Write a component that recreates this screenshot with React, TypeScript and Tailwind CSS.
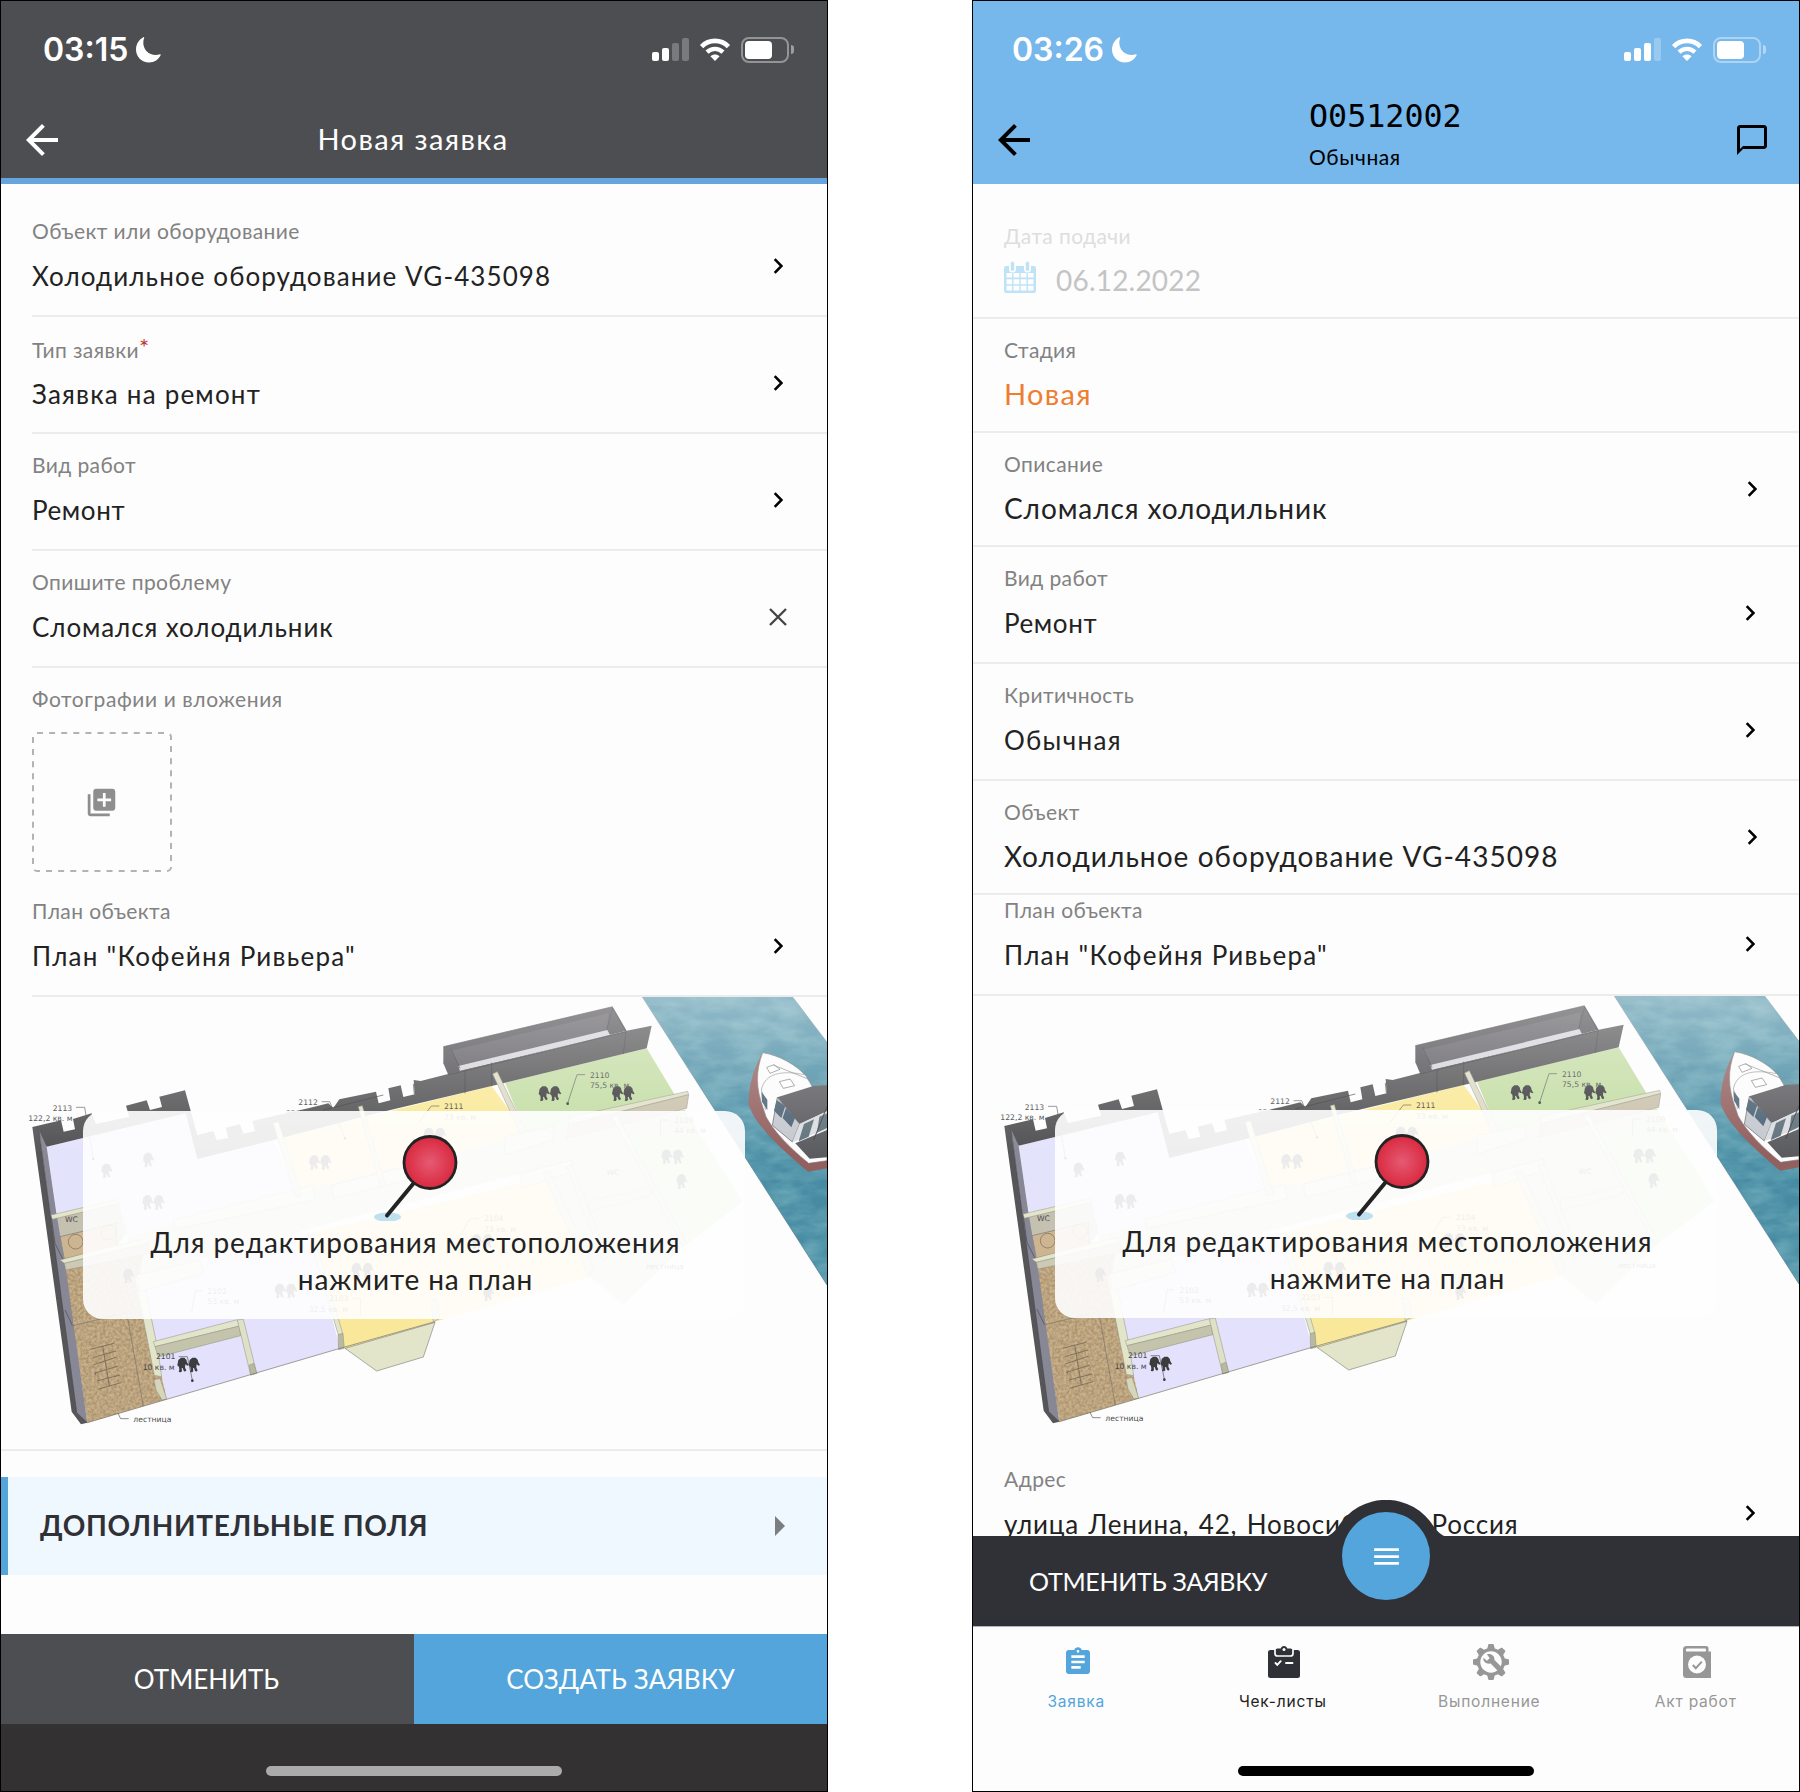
import type { ReactNode } from 'react';
import { MdArrowBack, MdAssignment, MdChatBubbleOutline, MdLibraryAdd, MdMenu } from 'react-icons/md';

function Moon() {
  return (
    <svg viewBox="0 0 26 26" className="size-[26px]" fill="currentColor">
      <path d="M9.2 0.8C8.6 2.4 8.3 4 8.3 5.8c0 7 5.5 12.2 12.4 12.2 1.6 0 3-.2 4.3-.8.5-.2.9.2.7.7C23.8 22.400 19.400 25.400 14 25.400 6.600 25.400 1 19.800 1 12.500 1 7.100 4 2.300 8.400.2c.6-.3 1 .1.8.6z" />
    </svg>
  );
}

function StatusBar({ time, bars, inset }: { time: string; bars: number; inset: string }) {
  const heights = ['h-[9px]', 'h-[13px]', 'h-[18px]', 'h-[23px]'];
  return (
    <div className={`flex h-[97px] items-center pr-[33px] text-white ${inset}`}>
      <span className="font-['Inter',sans-serif] text-[32px] font-semibold leading-none">{time}</span>
      <span className="ml-[7px]"><Moon /></span>
      <div className="ml-auto flex items-center gap-[10px]">
        <div className="flex h-[23px] items-end gap-[3px]">
          {heights.map((h, i) => (
            <span key={h} className={`w-[7px] rounded-[2px] bg-white ${h} ${i < bars ? '' : 'opacity-25'}`} />
          ))}
        </div>
        <svg viewBox="0 0 32 25" className="h-[25px] w-8" fill="none" stroke="#fff">
          <path d="M2.600 9.600C10 2 22 2 29.400 9.600" strokeWidth="4.600" />
          <path d="M8 15.200c4.600-4.400 11.400-4.400 16 0" strokeWidth="4.400" />
          <path d="M16 24l-4.600-4.800c2.700-2.300 6.500-2.300 9.200 0z" fill="#fff" stroke="none" />
        </svg>
        <div className="flex items-center gap-[2px]">
          <span className="block h-[26px] w-[48px] rounded-[8px] border-2 border-white/40 p-[2px]">
            <span className="block h-full w-[27px] rounded-[4px] bg-white" />
          </span>
          <span className="h-[9px] w-[3px] rounded-r-full bg-white/45" />
        </div>
      </div>
    </div>
  );
}

function Chevron() {
  return (
    <svg viewBox="0 0 10 16" className="h-4 w-[10px]" fill="none" stroke="#000" strokeWidth="2.600">
      <path d="M1.700 1.200L8.500 8l-6.800 6.800" />
    </svg>
  );
}

function Field({ label, value, frame, labelTop, valueClass, action, actionClass }: {
  label: ReactNode; value: ReactNode; frame: string; labelTop: string; valueClass: string; action?: ReactNode; actionClass?: string;
}) {
  return (
    <div className={`flex justify-between overflow-hidden ${frame}`}>
      <div className={`whitespace-nowrap ${labelTop}`}>
        <div className="text-[21px] leading-6 tracking-[0.4px] text-[#828282]">{label}</div>
        <div className={`leading-8 ${valueClass}`}>{value}</div>
      </div>
      {action && <div className={actionClass}>{action}</div>}
    </div>
  );
}

const V26 = 'mt-[17px] text-[26px] tracking-[1.1px] text-[#222]';
const V26_TIGHT = 'mt-[17px] text-[26px] tracking-[0.8px] text-[#222]';
const V28 = 'mt-4 text-[28px] tracking-[1.05px] text-[#222]';
const LEFT_ROW = 'ml-[31px] h-[117px] border-b-2 border-[#ececec]';
const ROW_TALL = 'pl-[31px] h-[117px] border-b-2 border-[#ececec]';
const ROW = 'pl-[31px] h-[114px] border-b-2 border-[#ececec]';

function Figures({ x, y, single }: { x: number; y: number; single?: boolean }) {
  const body = 'M2 8l8-7 10 0 6 6 2 8 5 8-4 2-6-4-1 10 4 8-4 4-4-3-3-8-3 1 1 8-3 4-7-1 2-6-1-9-5-5z';
  return (
    <g transform={`translate(${x} ${y})`} fill="#3c3c3e">
      <path d={body} />
      {!single && <path d={body} transform="translate(34 0)" />}
    </g>
  );
}

const labels: [number, number, string][] = [
  [158, 392, '2113'], [85, 424, '122,2 кв. м'], [895, 375, '2112'], [857, 407, '85 кв. м'], [1332, 388, '2111'], [1332, 420, '73 кв. м'],
  [1770, 293, '2110'], [1770, 325, '75,5 кв. м'], [195, 725, 'WC'], [468, 1138, '2101'], [428, 1170, '10 кв. м'],
  [400, 1326, 'лестница'], [622, 942, '2102'], [622, 973, '53 кв. м'], [987, 964, '2103'], [926, 995, '32,5 кв. м'],
  [1452, 724, '2104'], [1452, 755, '73 кв. м'], [2022, 428, '2109'], [2022, 460, '44 кв. м'], [1937, 866, 'лестница'], [1820, 585, 'WC'],
];

function FloorPlan({ id }: { id: string }) {
  return (
    <svg viewBox="3 51 2478 1356" className="h-[452px] w-[826px]">
      <defs>
        <linearGradient id={`${id}-haze`} x1="0" y1="0" x2="0" y2="1">
          <stop offset="0" stopColor="#fdfdfd" stopOpacity="0.42" />
          <stop offset="0.350" stopColor="#fdfdfd" stopOpacity="0" />
        </linearGradient>
        <filter id={`${id}-waves`} x="0" y="0" width="1" height="1" colorInterpolationFilters="sRGB">
          <feTurbulence type="fractalNoise" baseFrequency="0.01 0.025" numOctaves="4" seed="4" />
          <feColorMatrix values="0 0 0 0 0.42  0 0 0 0 0.66  0 0 0 0 0.72  1.8 0 0 0 -0.55" />
          <feComposite in2="SourceGraphic" operator="in" result="n" />
          <feMerge><feMergeNode in="SourceGraphic" /><feMergeNode in="n" /></feMerge>
        </filter>
        <filter id={`${id}-grain`} x="0" y="0" width="1" height="1" colorInterpolationFilters="sRGB">
          <feTurbulence type="fractalNoise" baseFrequency="0.12" numOctaves="2" seed="9" />
          <feColorMatrix values="0 0 0 0 0.62  0 0 0 0 0.52  0 0 0 0 0.38  1.6 0 0 0 -0.5" />
          <feComposite in2="SourceGraphic" operator="in" result="n" />
          <feMerge><feMergeNode in="SourceGraphic" /><feMergeNode in="n" /></feMerge>
        </filter>
      </defs>

      <path d="M1927 51H2378L2481 187V915z" fill="#478ba3" filter={`url(#${id}-waves)`} />
      <path d="M1927 51L2481 915M2378 51L2481 187" stroke="#5f8794" strokeWidth="2" />

      <g>
        <path d="M2288 218C2262 262 2244 320 2246 372c14 54 80 120 178 203l57-10v-40L2330 400z" fill="#92605f" />
        <path d="M2288 218c50 8 100 36 130 70l20 34 43 8v212l-55 8c-70-58-106-100-128-140l-8-24c-22-60-24-110-2-168z" fill="#fcfcfd" stroke="#777" strokeWidth="2" />
        <path d="M2284 330c10-50 60-60 130-46M2284 330c10 20 10 40 12 60" fill="none" stroke="#888" strokeWidth="2" />
        <path d="M2300 262l22-8 18 14-30 12zM2338 305l32-8 14 20-34 8z" fill="#fff" stroke="#666" strokeWidth="2" />
        <path d="M2320 255l161 65M2440 340l10-20" stroke="#777" strokeWidth="2" />
        <path d="M2332 352l108-34 41-2v78l-82 38z" fill="#5c5c60" />
        <path d="M2332 352l67 80-22 54-60-50z" fill="#c5c9cf" stroke="#555" strokeWidth="2" />
        <path d="M2330 360l26 18-12 36-22-22zM2358 384l28 28-12 30-26-28zM2284 335l18 24v32l-16-26z" fill="#4b6274" />
        <path d="M2399 432l82-38v54l-104 38z" fill="#dadde1" />
        <path d="M2412 432l30-14-16 52-30 14zM2458 410l23-10v44l-30 14z" fill="#61727c" />
        <path d="M2386 490l95-40v82l-52 4z" fill="#5a5c5f" />
        <path d="M2481 380l-40 100" stroke="#444" strokeWidth="3" />
      </g>

      {/* outer terrace */}
      <path d="M1330 200L1838 80l42 72-535 133-15-35z" fill="#4f4d52" />
      <path d="M1352 212L1826 100l-6 54-440 106z" fill="#5d5b60" />
      <path d="M1375 258L1822 150l8 15-450 108z" fill="#d6d4da" />
      <path d="M1352 205l28 60M1838 84l-18 66M1838 84l38 68M1330 200L1838 80" stroke="#333" strokeWidth="2" fill="none" />

      {/* floors */}
      <path d="M140 500L557 400l35 137 228-57 70 162-370 85-140 45-25-112-185 40z" fill="#e4e3fc" />
      <path d="M830 478L1475 318l105 145-680 177z" fill="#fae997" />
      <path d="M1515 308L1940 205l88 145-448 115z" fill="#c4dda4" />
      <path d="M1830 405l225-15 173 275-178 135z" fill="#d3e6ba" />
      <path d="M520 727L1600 460l230-55 220 395-180 175-100-85-130-330-690 180-520 145-50-112z" fill="#dcd9cf" />
      <path d="M425 890L930 760l90 345-520 153z" fill="#e3e1fb" />
      <path d="M935 760L1640 590l130 300-465 135-270 80z" fill="#fae89a" />
      <path d="M1035 1105l270-78-35 104-140 42z" fill="#e3e5ca" stroke="#85857a" strokeWidth="2" />
      <path d="M195 868L430 815l-10 75 80 368-238 70z" fill="#c9b18c" filter={`url(#${id}-grain)`} />
      <path d="M155 712L355 660l25 100-30 40-160 35z" fill="#c5c1b0" />
      <path d="M180 770l170-40v70l-157 37z" fill="#cdb592" stroke="#777" strokeWidth="2" />
      <circle cx="227" cy="785" r="22" fill="none" stroke="#7a6a50" strokeWidth="2" />
      <circle cx="325" cy="757" r="22" fill="none" stroke="#7a6a50" strokeWidth="2" />

      {/* battlement wall */}
      <path d="M97 441L183 421l8 34 34-7-6-31 56-17 13 32 100-22-10-33 62-16 10 29 36-9-8-31 77-19 37 134 48-12 10 27 35-6-8-31 43-10 10 28 35-8-8-30 171-39 57-14 15 14 18-26 110-23 8 35 35-9-6-36 37-9 8 35 34-8-3-43L1262 303 1400 268 1640 212 1880 152 1955 137 1940 205 1515 308 1475 318 1130 400 830 478 592 537 557 400 140 500z" fill="#525254" />
      <path d="M1240 312l3 30M1395 340v-70M1475 318v-70M1870 222l8-66M970 390l180-45M1345 285L1880 155" stroke="#37373a" strokeWidth="2" fill="none" />
      <path d="M97 441l118 854 28 38 19-5-30-40L117 450z" fill="#565659" />
      <path d="M117 450l23 50 30 205 28 165 64 458-32-30z" fill="#878796" />
      <path d="M117 450l113 848M153 705l12 85 30 60M195 990l22 46M230 1298l32 30" stroke="#4a4a50" strokeWidth="2" fill="none" />

      {/* partitions */}
      <g stroke="#8f8f80" strokeWidth="1.500">
        <path d="M153 705l202-47 5 12-203 48z" fill="#e3e5ca" />
        <path d="M180 840l170-45 90-20 5 15-252 60z" fill="#e3e5ca" />
        <path d="M193 850l252-60v30l-247 50z" fill="#ccc9b4" />
        <path d="M405 892l22-10 45 220 13 88-22-4z" fill="#e3e5ca" />
        <path d="M462 1200l18-5 20 62-14 3-18-30z" fill="#d5d6bc" />
        <path d="M460 1085l252-66 8 19-255 62z" fill="#e3e5ca" />
        <path d="M465 1100l253-62 4 29-247 64z" fill="#c3c4ab" />
        <path d="M712 1020l18-3 40 163-18 5z" fill="#dfe1c6" />
        <path d="M748 1155l14-5 8 30-18 5z" fill="#b9b9a0" />
        <path d="M925 765l15-5 88 300-12 8z" fill="#e3e5ca" />
        <path d="M1014 1064l15-4 4 45-17 4z" fill="#b9b9a0" />
        <path d="M1478 282l14-7 88 185-18 3z" fill="#dcdac4" />
        <path d="M1705 412l358-78 3 10-360 90z" fill="#dfe1c6" />
        <path d="M1706 434l360-90-6 41-360 90z" fill="#c9c2ab" />
        <path d="M1835 410l15-5 210 385-10 10z" fill="#dfe1c6" />
        <path d="M520 720l420-105 5 45-420 88zM995 615l225-55v40l-220 55zM1515 470l145-30v40l-145 45zM1560 580l155-40v35l-150 50zM410 885l190-45 10 40-190 55z" fill="#e2e0cc" />
        <path d="M820 430l15-5 70 220-20 5zM1075 380l12-3 70 240-15 3zM1630 580l20-5 130 290-15 25zM1700 560l15-5 110 280-15 10zM1765 665l190-45v25l-190 50z" fill="#dfe1c6" />
        <path d="M1300 1025l-10-70 20 5 10 55z" fill="#dfe1c6" />
      </g>
      <path d="M262 1328l238-70 520-153 285-80M430 1278l-50-280-165 40" fill="none" stroke="#77736a" strokeWidth="2" />
      <path d="M272 1108l70-18M278 1133l70-20M280 1155l70-24M283 1180l72-22M290 1203l70-18M292 1228l72-20M308 1098l20 120M285 1178l3 8" fill="none" stroke="#6a6254" strokeWidth="2.200" />

      <g fill="none" stroke="#555" strokeWidth="2">
        <path d="M228 382h26l26 155M965 365h24l46 110M1318 378h-24l-38 50M1755 284h-24l-28 86M536 1130h26l15 70M386 1316h-24l-8-16M606 932h-20l-11 66M1055 955h26v52M1436 715h-24l-30 50M2006 420h-24v48" />
      </g>
      <g fill="#3a3a3c">
        <circle cx="1703" cy="371" r="4" /><circle cx="577" cy="1202" r="4" /><circle cx="1035" cy="475" r="4" /><circle cx="280" cy="537" r="4" />
      </g>
      <g className="font-['DejaVu_Sans',sans-serif] text-[23px]" fill="#4a4a4c">
        {labels.map(([x, y, t]) => <text key={`${x}-${y}`} x={x} y={y}>{t}</text>)}
      </g>
      <Figures x={1617} y={318} /><Figures x={1837} y={318} /><Figures x={533} y={1132} />
      <Figures x={305} y={550} single /><Figures x={430} y={517} single /><Figures x={428} y={645} />
      <Figures x={928} y={525} /><Figures x={1055} y={848} /><Figures x={825} y={910} /><Figures x={1272} y={442} />
      <Figures x={370} y={865} single /><Figures x={1985} y={508} /><Figures x={2030} y={582} single /><Figures x={1415} y={762} /><Figures x={1450} y={918} single />
      <rect x="3" y="51" width="2478" height="1356" fill={`url(#${id}-haze)`} />
    </svg>
  );
}

function PlanCard({ id }: { id: string }) {
  return (
    <div className="relative h-[452px] overflow-hidden">
      <FloorPlan id={id} />
      <div className="absolute left-[82px] top-[114px] h-[208px] w-[662px] rounded-[20px] bg-[#fefefe]/91">
        <svg viewBox="0 0 90 90" className="ml-[286px] mt-[20px] h-[90px] w-[90px]">
          <defs>
            <radialGradient id={`${id}-pin`}>
              <stop offset="0" stopColor="#e55a73" />
              <stop offset="1" stopColor="#d9293f" />
            </radialGradient>
          </defs>
          <ellipse cx="18.500" cy="86" rx="13.500" ry="4.500" fill="#bfe0ee" />
          <path d="M18 84.500L44 53" stroke="#232324" strokeWidth="4" strokeLinecap="round" />
          <circle cx="61" cy="31.500" r="26" fill={`url(#${id}-pin)`} stroke="#232324" strokeWidth="2.800" />
        </svg>
        <p className="mt-[3px] pl-[3px] text-center text-[28px] leading-[37px] tracking-[0.9px] text-[#222]">
          Для редактирования местоположения<br />нажмите на план
        </p>
      </div>
    </div>
  );
}

function NewRequest() {
  return (
    <div className="flex h-[1792px] w-[828px] flex-col overflow-hidden border border-black bg-[#fdfdfd]">
      <header className="h-[183px] border-b-[6px] border-[#65a4dc] bg-[#4d4e51] text-white">
        <StatusBar time="03:15" bars={2} inset="pl-[42px]" />
        <div className="grid h-20 grid-cols-[80px_1fr_82px] items-center pt-1">
          <MdArrowBack className="ml-[17px] size-12" />
          <h1 className="pb-0.5 text-center text-[29px] leading-8 tracking-[1.4px]">Новая заявка</h1>
        </div>
      </header>
      <div className="pt-4">
        <Field label="Объект или оборудование" value="Холодильное оборудование VG-435098" frame={LEFT_ROW} labelTop="pt-[19px]" valueClass={V26} action={<Chevron />} actionClass="mr-[44px] mt-[58px]" />
        <Field label={<>Тип заявки<span className="relative -top-0.5 text-[24px] leading-none text-[#c0392b]">*</span></>} value="Заявка на ремонт" frame={LEFT_ROW} labelTop="pt-[20px]" valueClass="mt-4 text-[26px] tracking-[1.2px] text-[#222]" action={<Chevron />} actionClass="mr-[44px] mt-[58px]" />
        <Field label="Вид работ" value="Ремонт" frame={LEFT_ROW} labelTop="pt-[19px]" valueClass="mt-[17px] text-[26px] tracking-[0.6px] text-[#222]" action={<Chevron />} actionClass="mr-[44px] mt-[58px]" />
        <Field
          label="Опишите проблему" value="Сломался холодильник" frame={LEFT_ROW} labelTop="pt-[19px]"
          valueClass="mt-[17px] text-[26px] tracking-[0.9px] text-[#222]"
          action={<svg viewBox="0 0 18 18" className="size-[18px]" stroke="#444" strokeWidth="2.300"><path d="M1 1l16 16M17 1L1 17" /></svg>}
          actionClass="mr-[40px] mt-[57px]"
        />
      </div>
      <div className="ml-[31px] h-[212px] pt-[19px]">
        <div className="text-[21px] leading-6 tracking-[0.6px] text-[#828282]">Фотографии и вложения</div>
        <div className="relative mt-[21px] flex size-[140px] items-center justify-center">
          <svg viewBox="0 0 140 140" className="absolute inset-0 size-[140px]" fill="none" stroke="#b3b3b3" strokeWidth="2">
            <rect x="1" y="1" width="138" height="138" rx="4" strokeDasharray="6 6.100" />
          </svg>
          <MdLibraryAdd className="mr-px size-[33px] text-[#8e8e8e]" />
        </div>
      </div>
      <Field label="План объекта" value={'План "Кофейня Ривьера"'} frame={LEFT_ROW} labelTop="pt-[19px]" valueClass="mt-[17px] text-[26px] tracking-[1.25px] text-[#222]" action={<Chevron />} actionClass="mr-[44px] mt-[58px]" />
      <PlanCard id="new" />
      <div className="h-0.5 bg-[#ececec]" />
      <div className="mt-[26px] flex h-[98px] items-center justify-between border-l-[7px] border-[#53a5dc] bg-[#f0f8ff] pb-0.5 pl-8 pr-[42px]">
        <span className="text-[28px] font-bold leading-8 tracking-[0.65px] text-[#303137]">ДОПОЛНИТЕЛЬНЫЕ ПОЛЯ</span>
        <svg viewBox="0 0 10 20" className="mt-0.5 h-5 w-[10px]"><path d="M0 0l10 10L0 20z" fill="#7b7d7f" /></svg>
      </div>
      <div className="mt-[59px] grid h-[90px] grid-cols-2 text-[26px] text-white">
        <div className="flex items-center justify-center bg-[#4d4e51] pr-0.5">ОТМЕНИТЬ</div>
        <div className="flex items-center justify-center bg-[#53a5dc] tracking-[0.15px]">СОЗДАТЬ ЗАЯВКУ</div>
      </div>
      <div className="flex h-[67px] justify-center bg-[#333132] pt-[42px]">
        <div className="h-[10px] w-[296px] rounded-full bg-[#ababab]" />
      </div>
    </div>
  );
}

function CalendarIcon() {
  return (
    <svg viewBox="0 0 32 32" className="size-8" fill="#bfe3f6">
      <path fillRule="evenodd" d="M2 5h3v3a3.500 3.500 0 0 0 7 0V5h8v3a3.500 3.500 0 0 0 7 0V5h3a2 2 0 0 1 2 2v23a2 2 0 0 1-2 2H2a2 2 0 0 1-2-2V7a2 2 0 0 1 2-2zM2.500 12v4.600h5.600V12zm7 0v4.600h5.800V12zm7.200 0v4.600h5.800V12zm7.200 0v4.600h5.600V12zM2.500 18.200v5h5.600v-5zm7 0v5h5.800v-5zm7.200 0v5h5.800v-5zm7.200 0v5h5.600v-5zM2.500 24.800v4.700h5.600v-4.700zm7 0v4.700h5.800v-4.700zm7.200 0v4.700h5.800v-4.700zm7.200 0v4.700h5.600v-4.700z" />
      <rect x="6.800" y="0.500" width="3.400" height="9.500" rx="1.700" />
      <rect x="21.800" y="0.500" width="3.400" height="9.500" rx="1.700" />
    </svg>
  );
}

function ChecklistIcon() {
  return (
    <svg viewBox="0 0 32 32" className="size-8">
      <path d="M2.500 4h27A2.500 2.500 0 0 1 32 6.500v23a2.500 2.500 0 0 1-2.500 2.500h-27A2.500 2.500 0 0 1 0 29.500v-23A2.500 2.500 0 0 1 2.500 4z" fill="#303137" />
      <path d="M7 3v4.500A2.500 2.500 0 0 0 9.500 10h13A2.500 2.500 0 0 0 25 7.500V3" fill="#303137" stroke="#fdfdfd" strokeWidth="1.700" />
      <path d="M9.500 2.500h3.200C13.200 1 14.300 0 16 0s2.800 1 3.300 2.500h3.200c.6 0 1 .4 1 1V7c0 .6-.4 1-1 1h-13c-.6 0-1-.4-1-1V3.500c0-.6.400-1 1-1z" fill="#303137" />
      <circle cx="16" cy="3.600" r="1.500" fill="#fff" />
      <path d="M7.500 17l1.800 1.800 3.400-3.600M18 17h6.500" fill="none" stroke="#fff" strokeWidth="1.900" strokeLinecap="round" />
    </svg>
  );
}

function ServiceIcon() {
  return (
    <svg viewBox="0 0 36 36" className="size-9" fill="#979797">
      {[0, 45, 90, 135].map((a) => (
        <path key={a} transform={`rotate(${a} 18 18)`} d="M14.200 5l1-4.200c.1-.5.400-.8.900-.8h3.800c.5 0 .8.3.9.8l1 4.200v26l-1 4.200c-.1.500-.4.800-.9.800h-3.800c-.5 0-.8-.3-.9-.8l-1-4.200z" />
      ))}
      <circle cx="18" cy="18" r="14" />
      <circle cx="18" cy="18" r="10.700" fill="#fdfdfd" />
      <path d="M10.200 13.800l3.800 3 2.700-2.500-2.800-4c4-1.400 7.800 1.200 7.600 5.600l7.500 7.500-3.800 3.800-7.600-7.600c-4.400.8-7.500-1.800-7.400-5.800z" />
    </svg>
  );
}

function ReportIcon() {
  return (
    <svg viewBox="0 0 28 32" className="h-8 w-7">
      <path d="M3.500 0H23c1.400 0 2.500.9 2.500 2.300V5.500H28V32H3.500A3.500 3.500 0 0 1 0 28.500v-25A3.500 3.500 0 0 1 3.500 0z" fill="#979797" />
      <rect x="3" y="2.600" width="20" height="3" rx="1.200" fill="#fdfdfd" />
      <circle cx="14" cy="18.500" r="9" fill="#fdfdfd" />
      <path d="M9.800 19l3 3.200 6-6.600" fill="none" stroke="#979797" strokeWidth="2" />
    </svg>
  );
}

const tabs = [
  { title: 'Заявка', color: 'text-[#53a5dc]', icon: <MdAssignment className="size-8" /> },
  { title: 'Чек-листы', color: 'text-[#222]', icon: <ChecklistIcon /> },
  { title: 'Выполнение', color: 'text-[#979797]', icon: <ServiceIcon /> },
  { title: 'Акт работ', color: 'text-[#979797]', icon: <ReportIcon /> },
];

function RequestDetails() {
  return (
    <div className="flex h-[1792px] w-[828px] flex-col overflow-hidden border border-black bg-[#fdfdfd]">
      <header className="h-[183px] bg-[#76b7ec]">
        <StatusBar time="03:26" bars={3} inset="pl-[39px]" />
        <div className="flex h-[86px]">
          <MdArrowBack className="ml-[17px] mt-[18px] size-12" />
          <div className="ml-[271px]">
            <div className="font-['DejaVu_Sans_Mono',monospace] text-[31.700px] leading-9">O0512002</div>
            <div className="mt-[9px] text-[21px] leading-7 tracking-[0.6px]">Обычная</div>
          </div>
          <MdChatBubbleOutline className="ml-auto mr-[29px] mt-[24px] size-9" />
        </div>
      </header>
      <div className="h-[135px] border-b-2 border-[#ececec] pl-[31px] pt-[40px]">
        <div className="text-[21px] leading-6 tracking-[0.4px] text-[#dedede]">Дата подачи</div>
        <div className="mt-[13px] flex items-start gap-[20px]">
          <CalendarIcon />
          <span className="pt-[3px] text-[28px] leading-8 tracking-[0.2px] text-[#c4c4c4]">06.12.2022</span>
        </div>
      </div>
      <Field label="Стадия" value="Новая" frame={ROW} labelTop="pt-[19px]" valueClass="mt-4 text-[29px] tracking-[1.3px] text-[#f07c30]" />
      <Field label="Описание" value="Сломался холодильник" frame={ROW} labelTop="pt-[19px]" valueClass="mt-4 text-[28px] tracking-[0.9px] text-[#222]" action={<Chevron />} actionClass="mr-[42px] mt-[48px]" />
      <Field label="Вид работ" value="Ремонт" frame={ROW_TALL} labelTop="pt-[19px]" valueClass="mt-[17px] text-[26px] tracking-[0.6px] text-[#222]" action={<Chevron />} actionClass="mr-[44px] mt-[58px]" />
      <Field label="Критичность" value="Обычная" frame={ROW_TALL} labelTop="pt-[19px]" valueClass="mt-[17px] text-[26px] tracking-[1.35px] text-[#222]" action={<Chevron />} actionClass="mr-[44px] mt-[58px]" />
      <Field label="Объект" value="Холодильное оборудование VG-435098" frame={ROW} labelTop="pt-[19px]" valueClass={V28} action={<Chevron />} actionClass="mr-[42px] mt-[48px]" />
      <Field label="План объекта" value={'План "Кофейня Ривьера"'} frame="h-[101px] border-b-2 border-[#ececec] pl-[31px]" labelTop="pt-[3px]" valueClass="mt-[17px] text-[26px] tracking-[1.25px] text-[#222]" action={<Chevron />} actionClass="mr-[44px] mt-[41px]" />
      <PlanCard id="details" />
      <Field label="Адрес" value="улица Ленина, 42, Новосибирск, Россия" frame="h-[88px] pl-[31px]" labelTop="pt-[19px]" valueClass={V26_TIGHT + ' [word-spacing:2px]'} action={<Chevron />} actionClass="mr-[44px] mt-[57px]" />
      <div className="relative flex h-[90px] items-center bg-[#303137] pl-[56px]">
        <span className="pb-px text-[25px] leading-8 tracking-[-0.3px] text-white">ОТМЕНИТЬ ЗАЯВКУ</span>
        <svg viewBox="0 0 130 40" className="absolute -top-9 left-[348px] h-10 w-[130px]" fill="#303137">
          <path d="M5 37Q12 34 17 27A56 56 0 0 1 113 27Q118 34 125 37z" />
        </svg>
        <div className="absolute -top-6 left-[369px] flex size-[88px] items-center justify-center rounded-full bg-[#53a5dc]">
          <MdMenu className="size-[33px] text-white" />
        </div>
      </div>
      <nav className="grid h-[140px] grid-cols-4 border-t border-[#b5b6b8] pt-[17px]">
        {tabs.map((t) => (
          <div key={t.title} className={`flex flex-col items-center ${t.color}`}>
            <div className="flex h-9 items-center pl-[3px]">{t.icon}</div>
            <div className="mt-[10px] font-['Inter',sans-serif] text-[15.500px] leading-6 tracking-[0.8px]">{t.title}</div>
          </div>
        ))}
      </nav>
      <div className="flex justify-center">
        <div className="h-[10px] w-[296px] rounded-full bg-black" />
      </div>
    </div>
  );
}

export default function App() {
  return (
    <main className="flex h-[1792px] w-[1800px] justify-between bg-white font-['Lato',sans-serif]">
      <NewRequest />
      <RequestDetails />
    </main>
  );
}
